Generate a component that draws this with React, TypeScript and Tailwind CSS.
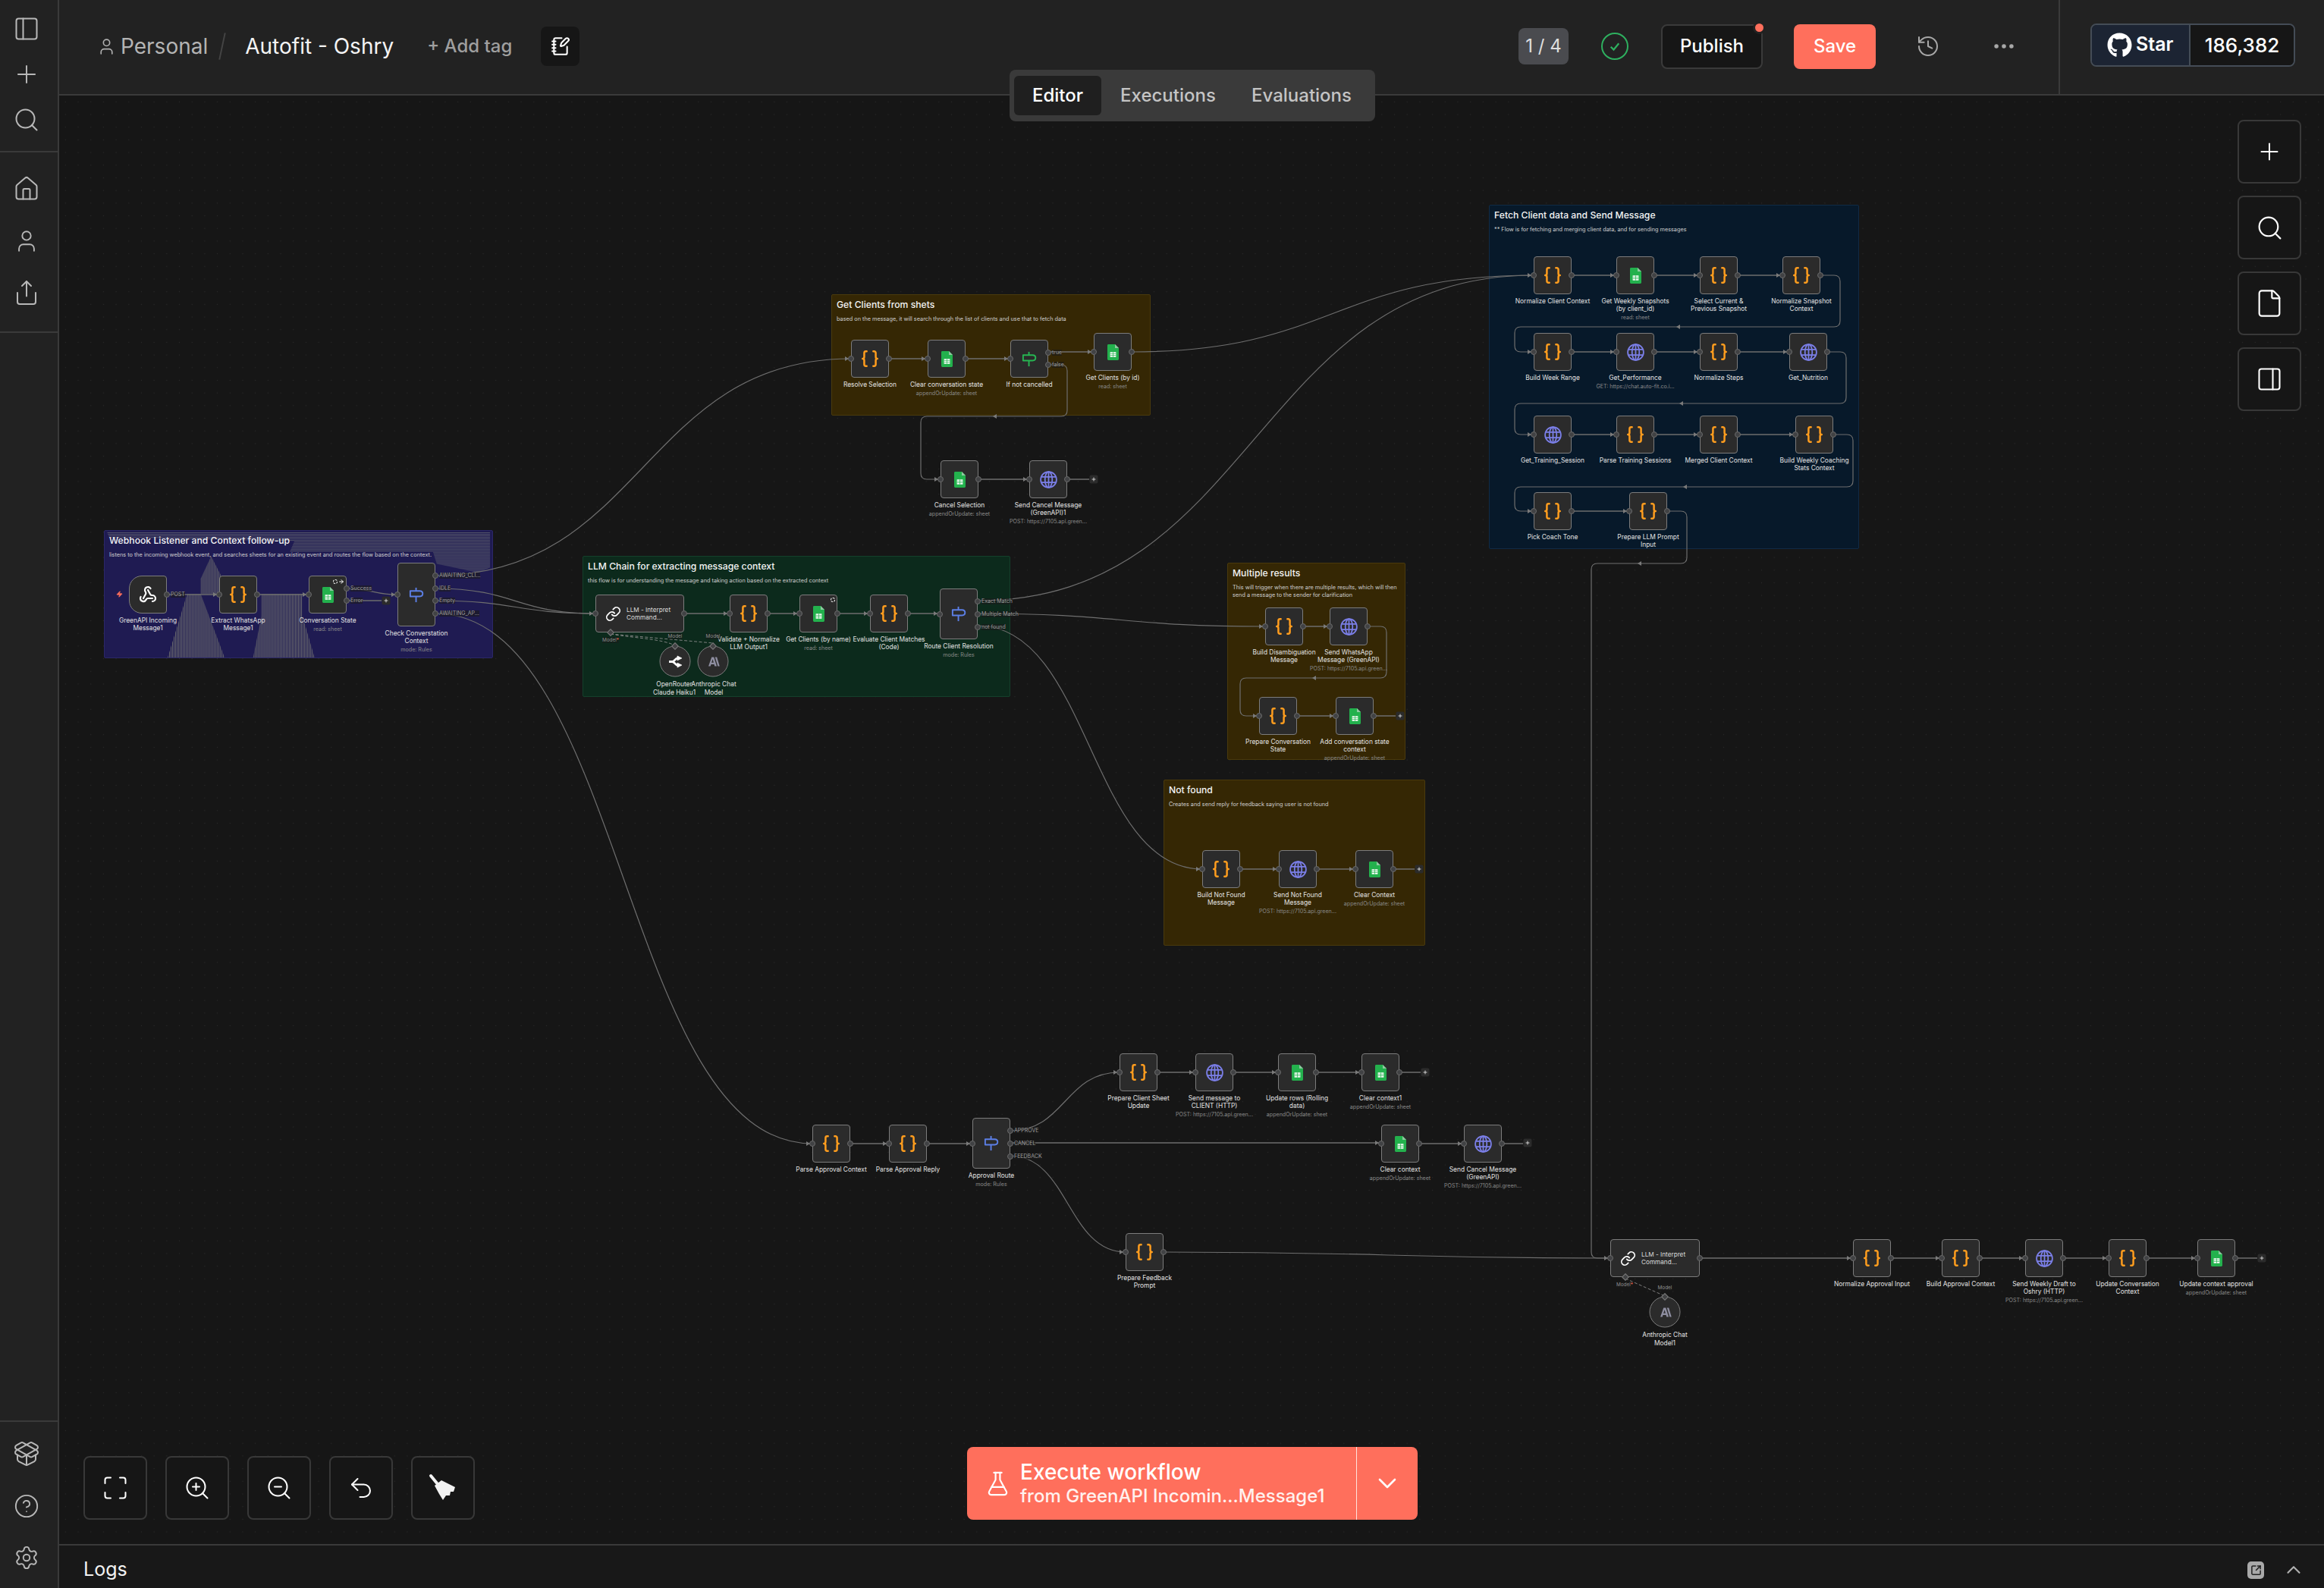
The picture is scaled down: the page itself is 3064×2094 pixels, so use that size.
import React from 'react';
import { PanelLeft, Plus, Search, House, User, Share, PackageOpen, CircleHelp, Settings, NotebookPen, History, Ellipsis, Maximize, ZoomIn, ZoomOut, Undo2, FlaskConical, ChevronDown, ChevronUp, Link, Webhook, Zap, File, PanelRight, SquareArrowOutUpRight, ArrowRight } from 'lucide-react';
import { FaGithub } from 'react-icons/fa';

type Out = { dy: number; t?: string };
type Nd = { x: number; y: number; w?: number; h?: number; icon: string; l: string[]; s?: string; noIn?: boolean; trigger?: boolean; outs?: Out[]; badge?: number; inner?: string[]; };

const CODE = 'code', SHEET = 'sheet', GLOBE = 'globe', SW = 'switch', IF = 'if', LINK = 'link', HOOK = 'webhook';
const AU = 'appendOrUpdate: sheet';
const POST = 'POST: https://7105.api.green...';

const nodes: Nd[] = [
  { x: 170, y: 759, icon: HOOK, trigger: true, noIn: true, l: ['GreenAPI Incoming', 'Message1'], outs: [{ dy: 0, t: 'POST' }] },
  { x: 289, y: 759, icon: CODE, l: ['Extract WhatsApp', 'Message1'] },
  { x: 407, y: 759, icon: SHEET, l: ['Conversation State'], s: 'read: sheet', badge: 2, outs: [{ dy: -8, t: 'Success' }, { dy: 8, t: 'Error' }] },
  { x: 524, y: 742, h: 84, icon: SW, l: ['Check Converstation', 'Context'], s: 'mode: Rules', outs: [{ dy: -25, t: 'AWAITING_CLI...' }, { dy: -8, t: 'IDLE' }, { dy: 8, t: 'Empty' }, { dy: 25, t: 'AWAITING_AP...' }] },

  { x: 785, y: 784, w: 117, icon: LINK, l: [], inner: ['LLM - Interpret', 'Command...'] },
  { x: 962, y: 784, icon: CODE, l: ['Validate + Normalize', 'LLM Output1'] },
  { x: 1054, y: 784, icon: SHEET, l: ['Get Clients (by name)'], s: 'read: sheet', badge: 1 },
  { x: 1147, y: 784, icon: CODE, l: ['Evaluate Client Matches', '(Code)'] },
  { x: 1239, y: 776, h: 67, icon: SW, l: ['Route Client Resolution'], s: 'mode: Rules', outs: [{ dy: -17, t: 'Exact Match' }, { dy: 0, t: 'Multiple Match' }, { dy: 17, t: 'not found' }] },

  { x: 1122, y: 448, icon: CODE, l: ['Resolve Selection'] },
  { x: 1223, y: 448, icon: SHEET, l: ['Clear conversation state'], s: AU },
  { x: 1332, y: 448, icon: IF, l: ['If not cancelled'], outs: [{ dy: -8, t: 'true' }, { dy: 8, t: 'false' }] },
  { x: 1442, y: 439, icon: SHEET, l: ['Get Clients (by id)'], s: 'read: sheet' },
  { x: 1240, y: 607, icon: SHEET, l: ['Cancel Selection'], s: AU },
  { x: 1357, y: 607, icon: GLOBE, l: ['Send Cancel Message', '(GreenAPI)1'], s: POST },

  { x: 1668, y: 801, icon: CODE, l: ['Build Disambiguation', 'Message'] },
  { x: 1753, y: 801, icon: GLOBE, l: ['Send WhatsApp', 'Message (GreenAPI)'], s: POST },
  { x: 1660, y: 919, icon: CODE, l: ['Prepare Conversation', 'State'] },
  { x: 1761, y: 919, icon: SHEET, l: ['Add conversation state', 'context'], s: AU },

  { x: 1585, y: 1121, icon: CODE, l: ['Build Not Found', 'Message'] },
  { x: 1686, y: 1121, icon: GLOBE, l: ['Send Not Found', 'Message'], s: POST },
  { x: 1787, y: 1121, icon: SHEET, l: ['Clear Context'], s: AU },

  { x: 2022, y: 338, icon: CODE, l: ['Normalize Client Context'] },
  { x: 2131, y: 338, icon: SHEET, l: ['Get Weekly Snapshots', '(by client_id)'], s: 'read: sheet' },
  { x: 2241, y: 338, icon: CODE, l: ['Select Current &', 'Previous Snapshot'] },
  { x: 2350, y: 338, icon: CODE, l: ['Normalize Snapshot', 'Context'] },
  { x: 2022, y: 439, icon: CODE, l: ['Build Week Range'] },
  { x: 2131, y: 439, icon: GLOBE, l: ['Get_Performance'], s: 'GET: https://chat.auto-fit.co.i...' },
  { x: 2241, y: 439, icon: CODE, l: ['Normalize Steps'] },
  { x: 2359, y: 439, icon: GLOBE, l: ['Get_Nutrition'] },
  { x: 2022, y: 548, icon: GLOBE, l: ['Get_Training_Session'] },
  { x: 2131, y: 548, icon: CODE, l: ['Parse Training Sessions'] },
  { x: 2241, y: 548, icon: CODE, l: ['Merged Client Context'] },
  { x: 2367, y: 548, icon: CODE, l: ['Build Weekly Coaching', 'Stats Context'] },
  { x: 2022, y: 649, icon: CODE, l: ['Pick Coach Tone'] },
  { x: 2148, y: 649, icon: CODE, l: ['Prepare LLM Prompt', 'Input'] },

  { x: 1071, y: 1483, icon: CODE, l: ['Parse Approval Context'] },
  { x: 1172, y: 1483, icon: CODE, l: ['Parse Approval Reply'] },
  { x: 1282, y: 1474, h: 67, icon: SW, l: ['Approval Route'], s: 'mode: Rules', outs: [{ dy: -17, t: 'APPROVE' }, { dy: 0, t: 'CANCEL' }, { dy: 17, t: 'FEEDBACK' }] },
  { x: 1476, y: 1389, icon: CODE, l: ['Prepare Client Sheet', 'Update'] },
  { x: 1576, y: 1389, icon: GLOBE, l: ['Send message to', 'CLIENT (HTTP)'], s: POST },
  { x: 1685, y: 1389, icon: SHEET, l: ['Update rows (Rolling', 'data)'], s: AU },
  { x: 1795, y: 1389, icon: SHEET, l: ['Clear context1'], s: AU },
  { x: 1821, y: 1483, icon: SHEET, l: ['Clear context'], s: AU },
  { x: 1930, y: 1483, icon: GLOBE, l: ['Send Cancel Message', '(GreenAPI)'], s: POST },
  { x: 1484, y: 1626, icon: CODE, l: ['Prepare Feedback', 'Prompt'] },

  { x: 2123, y: 1634, w: 118, icon: LINK, l: [], inner: ['LLM - Interpret', 'Command...'] },
  { x: 2443, y: 1634, icon: CODE, l: ['Normalize Approval Input'] },
  { x: 2560, y: 1634, icon: CODE, l: ['Build Approval Context'] },
  { x: 2670, y: 1634, icon: GLOBE, l: ['Send Weekly Draft to', 'Oshry (HTTP)'], s: POST },
  { x: 2780, y: 1634, icon: CODE, l: ['Update Conversation', 'Context'] },
  { x: 2897, y: 1634, icon: SHEET, l: ['Update context approval'], s: AU },
];

const circles = [
  { cx: 890, cy: 872, kind: 'router', l: ['OpenRouter', 'Claude Haiku1'], lx: 889 },
  { cx: 940, cy: 872, kind: 'anthropic', l: ['Anthropic Chat', 'Model'], lx: 941 },
  { cx: 2195, cy: 1730, kind: 'anthropic', l: ['Anthropic Chat', 'Model1'], lx: 2195 },
];

const groups = [
  { x: 137, y: 699, w: 513, h: 169, bg: 'bg-[#1f1b52]', bd: 'border-[#2b2767]', t: 'Webhook Listener and Context follow-up', s: ['listens to the incoming webhook event, and searches sheets for an existing event and routes the flow based on the context.'], hatch: true },
  { x: 768, y: 733, w: 564, h: 186, bg: 'bg-[#0c2a1c]', bd: 'border-[#14402b]', t: 'LLM Chain for extracting message context', s: ['this flow is for understanding the message and taking action based on the extracted context'] },
  { x: 1096, y: 388, w: 421, h: 160, bg: 'bg-[#352704]', bd: 'border-[#4a3a0c]', t: 'Get Clients from shets', s: ['based on the message, it will search through the list of clients and use that to fetch data'] },
  { x: 1618, y: 742, w: 235, h: 260, bg: 'bg-[#352704]', bd: 'border-[#4a3a0c]', t: 'Multiple results', s: ['This will trigger when there are multiple results, which will then', 'send a message to the sender for clarification'] },
  { x: 1534, y: 1028, w: 345, h: 219, bg: 'bg-[#352704]', bd: 'border-[#4a3a0c]', t: 'Not found', s: ['Creates and send reply for feedback saying user is not found'] },
  { x: 1963, y: 270, w: 488, h: 454, bg: 'bg-[#07192a]', bd: 'border-[#102a45]', t: 'Fetch Client data and Send Message', s: ['** Flow is for fetching and merging client data, and for sending messages'] },
];

const plusButtons = [[509, 792], [1442, 632], [1846, 944], [1871, 1146], [1879, 1414], [2014, 1507], [2982, 1659]];

const straight: number[][] = [
  [220, 784, 289], [339, 784, 407], [902, 809, 962], [1012, 809, 1054], [1104, 809, 1147], [1197, 809, 1239],
  [1172, 473, 1223], [1273, 473, 1332], [1382, 464, 1442], [1290, 632, 1357],
  [1718, 826, 1753], [1710, 944, 1761], [1635, 1146, 1686], [1736, 1146, 1787],
  [2072, 363, 2131], [2181, 363, 2241], [2291, 363, 2350],
  [2072, 464, 2131], [2181, 464, 2241], [2291, 464, 2359],
  [2072, 573, 2131], [2181, 573, 2241], [2291, 573, 2367],
  [2072, 674, 2148],
  [1122, 1508, 1172], [1222, 1508, 1282], [1526, 1414, 1576], [1626, 1414, 1685], [1735, 1414, 1795],
  [1871, 1508, 1930], [1332, 1507, 1821],
  [2241, 1659, 2443], [2493, 1659, 2560], [2610, 1659, 2670], [2720, 1659, 2780], [2830, 1659, 2897],
];
const toPlus: number[][] = [[457, 792, 503], [1407, 632, 1436], [1811, 944, 1840], [1837, 1146, 1865], [1845, 1414, 1873], [1980, 1508, 2008], [2947, 1659, 2976]];

const wrap = (x1: number, y1: number, xr: number, ym: number, xl: number, y2: number, x2: number) =>
  `M${x1} ${y1}H${xr - 8}Q${xr} ${y1} ${xr} ${y1 + 8}V${ym - 8}Q${xr} ${ym} ${xr - 8} ${ym}H${xl + 8}Q${xl} ${ym} ${xl} ${ym + 8}V${y2 - 8}Q${xl} ${y2} ${xl + 8} ${y2}H${x2}`;

const curves = [
  'M457 776C490 776 490 784 524 784',
  'M574 759C848 759 848 473 1122 473',
  'M574 776C680 776 680 809 785 809',
  'M574 792C680 792 680 809 785 809',
  'M574 809C822 809 822 1508 1071 1508',
  'M1289 792C1655 792 1655 363 2022 363',
  'M1492 464C1757 464 1757 363 2022 363',
  'M1289 809C1478 809 1478 826 1668 826',
  'M1289 825C1437 825 1437 1146 1585 1146',
  'M1332 1491C1404 1491 1404 1414 1476 1414',
  'M1332 1524C1408 1524 1408 1651 1484 1651',
  'M1534 1651C1830 1651 1830 1659 2123 1659',
  wrap(2400, 363, 2426, 431, 1997, 464, 2022),
  wrap(2409, 464, 2434, 532, 1997, 573, 2022),
  wrap(2417, 573, 2443, 642, 1997, 674, 2022),
  wrap(2198, 674, 2224, 743, 2098, 1659, 2123),
  wrap(1382, 481, 1407, 549, 1214, 632, 1240),
  wrap(1803, 826, 1828, 894, 1635, 944, 1660),
];
const arrowsR = [[524, 784], [1122, 473], [785, 809], [1071, 1508], [2022, 363], [1668, 826], [1585, 1146], [1476, 1414], [1484, 1651], [2123, 1659], [2022, 464], [2022, 573], [2022, 674], [1240, 632], [1660, 944]];
const arrowsL = [[2213, 431], [2217, 532], [2222, 642], [2162, 743], [1312, 549], [1733, 894]];

function Braces() {
  return (
    <svg width="26" height="26" viewBox="0 0 24 24" fill="none" stroke="#ff9d1e" strokeWidth="2.3" strokeLinecap="round" strokeLinejoin="round">
      <path d="M8 3H7a2 2 0 0 0-2 2v5a2 2 0 0 1-2 2 2 2 0 0 1 2 2v5c0 1.1.9 2 2 2h1" />
      <path d="M16 21h1a2 2 0 0 0 2-2v-5c0-1.1.9-2 2-2a2 2 0 0 1-2-2V5a2 2 0 0 0-2-2h-1" />
    </svg>
  );
}
function Sheet() {
  return (
    <svg width="15" height="21" viewBox="0 0 15 21">
      <path d="M1.4 0H10L15 5V19.6A1.4 1.4 0 0 1 13.6 21H1.4A1.4 1.4 0 0 1 0 19.6V1.4A1.4 1.4 0 0 1 1.4 0Z" fill="#23b14d" />
      <path d="M10 0L15 5H10Z" fill="#8fc9a0" />
      <rect x="3.6" y="10.3" width="7.8" height="6.4" fill="#fff" />
      <path d="M3.6 12.4H11.4M3.6 14.5H11.4M7.5 10.3V16.7" stroke="#23b14d" strokeWidth="0.7" />
    </svg>
  );
}
function Globe() {
  return (
    <svg width="25" height="25" viewBox="0 0 24 24" fill="none" stroke="#7b7fe8" strokeWidth="1.7">
      <circle cx="12" cy="12" r="10" />
      <ellipse cx="12" cy="12" rx="4.6" ry="10" />
      <path d="M12 2V22M2.9 8.5H21.1M2.9 15.5H21.1" />
    </svg>
  );
}
function Sign({ color }: { color: string }) {
  return (
    <svg width="23" height="23" viewBox="0 0 24 24" fill="none" stroke={color} strokeWidth="2">
      <path d="M11 2V22" />
      <path d="M3 6.5H16C21.5 6.5 21.5 14 16 14H3Z" strokeLinejoin="round" fill="#2b2b2b" />
    </svg>
  );
}
function RouterLogo() {
  return (
    <svg width="20" height="20" viewBox="0 0 24 24" fill="none" stroke="#fff" strokeWidth="3.4" strokeLinejoin="round">
      <path d="M2 12H7C11 12 11 6.5 16 6.5" />
      <path d="M2 12H7C11 12 11 17.5 16 17.5" />
      <path d="M15 3L22 6.5L15 10Z" fill="#fff" strokeWidth="1" />
      <path d="M15 14L22 17.5L15 21Z" fill="#fff" strokeWidth="1" />
    </svg>
  );
}
function AnthropicLogo() {
  return (
    <svg width="18" height="18" viewBox="0 0 24 24" fill="#8e8ea0">
      <path d="M9 4H13L18 20H14.4L13.4 16.6H8L6.9 20H3.4ZM8.9 13.6H12.5L10.8 7.8Z" />
      <path d="M15 4H18.2L23 20H19.8Z" />
    </svg>
  );
}
function Broom() {
  return (
    <svg width="48" height="44" viewBox="0 0 48 44">
      <path d="M8 6L17 17" stroke="#f2f2f2" strokeWidth="4" strokeLinecap="round" />
      <polygon points="13,19 22,12 40,21 38,27 34,27 33,32 28,32 24,38 19,30" fill="#f2f2f2" />
    </svg>
  );
}

function NodeIcon({ k }: { k: string }) {
  if (k === CODE) return <Braces />;
  if (k === SHEET) return <Sheet />;
  if (k === GLOBE) return <Globe />;
  if (k === SW) return <Sign color="#5c7fe6" />;
  if (k === IF) return <Sign color="#27b552" />;
  if (k === LINK) return <Link size={21} color="#fff" strokeWidth={2} />;
  return <Webhook size={24} color="#fff" strokeWidth={2.2} />;
}

function Port({ top, left }: { top: number; left: string }) {
  return <span className={`absolute size-[8px] rounded-full bg-[#414244] border border-[#6a6a6a] -translate-x-1/2 -translate-y-1/2 ${left}`} style={{ top }} />;
}

function CanvasNode({ n }: { n: Nd }) {
  const w = n.w ?? 50;
  const h = n.h ?? 50;
  return (
    <div className="absolute" style={{ left: n.x - 78, top: n.y - 126, width: w, height: h }}>
      <div className={`w-full h-full bg-[#2b2b2b] border border-[#7c7c7c] flex items-center ${n.trigger ? 'rounded-l-[17px] rounded-r-[4px]' : 'rounded-[4px]'} ${n.inner ? 'pl-[12px] gap-[7px]' : 'justify-center'}`}>
        <NodeIcon k={n.icon} />
        {n.inner && (
          <div className="text-[8.2px] leading-[10.5px] text-[#dcdcdc] whitespace-nowrap">
            {n.inner.map((t) => <div key={t}>{t}</div>)}
          </div>
        )}
      </div>
      {n.badge ? (
        <div className="absolute top-[4px] right-[3px] flex items-center gap-[1px]">
          <span className="size-[6px] rounded-full border border-dashed border-white" />
          {n.badge === 2 && <ArrowRight size={8} color="#fff" strokeWidth={3} />}
        </div>
      ) : null}
      {!n.noIn && <Port top={h / 2} left="left-0" />}
      {(n.outs ?? [{ dy: 0 }]).map((o, i) => (
        <React.Fragment key={i}>
          <Port top={h / 2 + o.dy} left="left-full" />
          {o.t && (
            <span className="absolute left-[calc(100%+5px)] -translate-y-1/2 text-[7px] leading-[8px] text-[#9c9c9c] bg-[#1a1a1a]/60 whitespace-nowrap" style={{ top: h / 2 + o.dy }}>{o.t}</span>
          )}
        </React.Fragment>
      ))}
      {n.l.length > 0 && (
        <div className="absolute top-full left-1/2 -translate-x-1/2 mt-[3.5px] flex flex-col items-center whitespace-nowrap">
          {n.l.map((t) => <div key={t} className="text-[8.4px] leading-[10.6px] text-[#e2e2e2]">{t}</div>)}
          {n.s && <div className="text-[7.1px] leading-[9px] mt-[1.6px] text-[#8a8a8a]">{n.s}</div>}
        </div>
      )}
    </div>
  );
}

function Side({ children }: { children: React.ReactNode }) {
  return <div className="size-[84px] flex items-center justify-center rounded-[8px] border-2 border-[#383838] bg-[#161616] text-white">{children}</div>;
}

function SideIcon({ Icon, size = 36 }: { Icon: React.ComponentType<{ size?: number; strokeWidth?: number }>; size?: number }) {
  return (
    <div className="h-[68.5px] flex items-center justify-center text-[#b8b8b8]">
      <Icon size={size} strokeWidth={1.35} />
    </div>
  );
}

export default function App() {
  return (
    <div className="flex w-[3064px] h-[2094px] overflow-hidden bg-[#161616] text-white [font-family:Inter,sans-serif]">
      <aside className="w-[78px] shrink-0 h-full bg-[#222222] border-r-2 border-[#3a3a3a] flex flex-col pr-0">
        <div className="h-[201px] pt-[8px] pr-[6px] border-b-2 border-[#3a3a3a] text-[#b8b8b8] flex flex-col items-center">
          <div className="h-[60px] flex items-center"><PanelLeft size={36} strokeWidth={1.35} /></div>
          <div className="h-[60px] flex items-center"><Plus size={38} strokeWidth={1.25} /></div>
          <div className="h-[60px] flex items-center"><Search size={36} strokeWidth={1.35} /></div>
        </div>
        <div className="h-[238px] pt-[14px] pr-[6px] border-b-2 border-[#3a3a3a]">
          <SideIcon Icon={House} />
          <SideIcon Icon={User} size={34} />
          <SideIcon Icon={Share} />
        </div>
        <div className="flex-1" />
        <div className="h-[221px] pt-[8px] pr-[6px] border-t-2 border-[#3a3a3a]">
          <SideIcon Icon={PackageOpen} />
          <SideIcon Icon={CircleHelp} size={34} />
          <SideIcon Icon={Settings} size={34} />
        </div>
      </aside>

      <div className="flex-1 flex flex-col min-w-0">
        <header className="h-[126px] shrink-0 bg-[#222222] border-b-2 border-[#3a3a3a] flex items-center">
          <div className="pl-[50px] flex items-center flex-1 pb-[2px]">
            <User size={25} strokeWidth={1.6} className="text-[#b0b0b0]" />
            <span className="ml-[6px] text-[28px] text-[#b4b4b4]">Personal</span>
            <span className="ml-[18px] w-[2px] h-[36px] bg-[#444] rotate-[12deg]" />
            <span className="ml-[29px] text-[28px] text-[#f4f4f4]">Autofit - Oshry</span>
            <span className="ml-[44px] text-[24px] font-medium text-[#9f9f9f]">+ Add tag</span>
            <span className="ml-[38px] w-[51px] h-[52px] rounded-[8px] bg-[#161616] flex items-center justify-center"><NotebookPen size={26} strokeWidth={1.9} className="text-white" /></span>
            <div className="flex-1" />
            <span className="w-[66px] h-[48px] rounded-[8px] bg-[#4a4b4f] flex items-center justify-center text-[24px] text-[#dedede]">1 / 4</span>
            <span className="ml-[43px] size-[36px] rounded-full border-2 border-[#2eb05f] flex items-center justify-center">
              <svg width="18" height="18" viewBox="0 0 24 24" fill="none" stroke="#2eb05f" strokeWidth="3"><path d="M5 13L10 18L19 7" /></svg>
            </span>
            <div className="relative ml-[43px] w-[134px] h-[59px] rounded-[8px] bg-[#161616] border-2 border-[#3a3a3a] flex items-center justify-center text-[24px] font-medium">
              Publish
              <span className="absolute -top-[6px] -right-[6px] size-[17px] rounded-full bg-[#ff6f5c] border-[3px] border-[#222222]" />
            </div>
            <div className="ml-[41px] w-[108px] h-[59px] rounded-[8px] bg-[#ff6f5c] flex items-center justify-center text-[24px] font-medium">Save</div>
            <History size={32} strokeWidth={1.5} className="ml-[53px] text-[#a8a8a8]" />
            <Ellipsis size={34} strokeWidth={1.9} className="ml-[67px] text-[#a8a8a8]" />
            <div className="w-[55px]" />
          </div>
          <div className="w-[350px] h-full border-l-2 border-[#3a3a3a] flex items-center pl-[40px] pb-[6px]">
            <div className="w-[270px] h-[57px] rounded-[8px] border-2 border-[#444c56] flex overflow-hidden">
              <div className="w-[130px] bg-[#1c2433] border-r-2 border-[#444c56] flex items-center pl-[20px] gap-[5px]">
                <FaGithub size={33} />
                <span className="text-[25px] font-semibold">Star</span>
              </div>
              <div className="flex-1 bg-[#161616] flex items-center justify-center text-[26px] font-medium">186,382</div>
            </div>
          </div>
        </header>

        <main className="relative flex-1 bg-[#161616] bg-[radial-gradient(circle,#2a2a2a_0.8px,transparent_1px)] bg-[size:16.7px_16.7px]">
          {groups.map((g) => (
            <div key={g.t} className={`absolute rounded-[2px] border pl-[6px] pt-[5px] ${g.bg} ${g.bd}`} style={{ left: g.x - 78, top: g.y - 126, width: g.w, height: g.h }}>
              {g.hatch && (
                <svg className="absolute inset-0" width="100%" height="100%" viewBox="0 0 513 169">
                  <defs>
                    <pattern id="vh" width="2" height="2" patternUnits="userSpaceOnUse"><rect width="1" height="2" fill="#6a6a6e" /></pattern>
                    <pattern id="hh" width="2" height="2" patternUnits="userSpaceOnUse"><rect width="2" height="1" fill="#55566a" /></pattern>
                  </defs>
                  <polygon points="1,1 512,1 512,49 497,56 441,44 436,28 245,28 251,14 4,9" fill="url(#hh)" />
                  <polygon points="140,34 155,63 155,84 126,84 126,64" fill="url(#vh)" />
                  <polygon points="108,84 126,84 158,169 82,169" fill="url(#vh)" />
                  <polygon points="207,84 262,84 262,114 278,169 196,169 207,114" fill="url(#vh)" />
                </svg>
              )}
              <div className="relative text-[12.2px] leading-[16px] font-medium text-[#f4f4f4] whitespace-nowrap">{g.t}</div>
              <div className="relative mt-[6px]">
                {g.s.map((t) => <div key={t} className="text-[7.3px] leading-[10px] text-[#d0d0d0] whitespace-nowrap">{t}</div>)}
              </div>
            </div>
          ))}

          <svg className="absolute left-0 top-0" width="2986" height="1910" viewBox="78 126 2986 1910" fill="none">
            {straight.concat(toPlus).map(([a, y, b], i) => <path key={i} d={`M${a} ${y}H${b}`} stroke="#6e6e6e" strokeWidth="1.5" />)}
            {curves.map((d, i) => <path key={i} d={d} stroke="#6e6e6e" strokeWidth="1.2" />)}
            {straight.map(([, y, b], i) => <polygon key={i} points={`${b - 3},${y} ${b - 8},${y - 3} ${b - 8},${y + 3}`} fill="#7a7a7a" />)}
            {arrowsR.map(([x, y], i) => <polygon key={i} points={`${x - 3},${y} ${x - 8},${y - 3} ${x - 8},${y + 3}`} fill="#7a7a7a" />)}
            {arrowsL.map(([x, y], i) => <polygon key={i} points={`${x - 3},${y} ${x + 2},${y - 3} ${x + 2},${y + 3}`} fill="#7a7a7a" />)}
            <path d="M805 836C840 842 870 842 890 851M805 836L940 848M2143 1686L2195 1709" stroke="#8a8a8a" strokeWidth="0.9" strokeDasharray="4 2.5" />
          </svg>

          {nodes.map((n, i) => <CanvasNode key={i} n={n} />)}

          {circles.map((c, i) => (
            <div key={i} className="absolute size-[41px] -translate-x-1/2 -translate-y-1/2 rounded-full bg-[#2b2b2b] border border-[#7c7c7c] flex items-center justify-center" style={{ left: c.cx - 78, top: c.cy - 126 }}>
              {c.kind === 'router' ? <RouterLogo /> : <AnthropicLogo />}
              <span className="absolute -top-[4px] left-1/2 -ml-[3.5px] size-[7px] rotate-45 bg-[#414244] border border-[#7a7a7a]" />
            </div>
          ))}
          {circles.map((c, i) => (
            <div key={i} className="absolute -translate-x-1/2 flex flex-col items-center whitespace-nowrap text-[8.4px] leading-[10.6px] text-[#e2e2e2]" style={{ left: c.lx - 78, top: c.cy + 20 + 5 - 126 }}>
              {c.l.map((t) => <div key={t}>{t}</div>)}
            </div>
          ))}
          {[[805, 834], [2143, 1684]].map(([x, y], i) => (
            <span key={i} className="absolute size-[7px] -translate-x-1/2 -translate-y-1/2 rotate-45 bg-[#414244] border border-[#7a7a7a]" style={{ left: x - 78, top: y - 126 }} />
          ))}
          {[[805, 844, 1], [890, 839, 0], [940, 839, 0], [2142, 1694, 1], [2195, 1698, 0]].map(([x, y, star], i) => (
            <span key={i} className="absolute -translate-x-1/2 -translate-y-1/2 text-[6.4px] leading-[8px] text-[#8e8e8e] bg-[#1a1a1a]/50" style={{ left: x - 78, top: y - 126 }}>
              Model{star ? <span className="text-[#ff6f5c]">*</span> : null}
            </span>
          ))}
          <Zap size={9} fill="#ff6f5c" stroke="#ff6f5c" className="absolute left-[75px] top-[653px]" />

          {plusButtons.map(([x, y], i) => (
            <span key={i} className="absolute size-[11px] -translate-x-1/2 -translate-y-1/2 rounded-[2px] bg-[#2b2b2b] flex items-center justify-center" style={{ left: x - 78, top: y - 126 }}>
              <Plus size={7} color="#e4e4e4" strokeWidth={3} />
            </span>
          ))}

          {/* tabs */}
          <div className="absolute left-[1253px] -top-[34px] w-[482px] h-[68px] rounded-[8px] bg-[#3a3a3a] flex items-center px-[6px] text-[24px] font-medium text-[#c4c4c4]">
            <div className="w-[115px] h-[52px] rounded-[6px] bg-[#1f1f1f] text-white flex items-center justify-center">Editor</div>
            <div className="w-[176px] text-center">Executions</div>
            <div className="w-[176px] text-center">Evaluations</div>
          </div>

          {/* right tools */}
          <div className="absolute left-[2872px] top-[32px] flex flex-col gap-[16px]">
            <Side><Plus size={36} strokeWidth={1.35} /></Side>
            <Side><Search size={37} strokeWidth={1.4} /></Side>
            <Side><File size={40} strokeWidth={1.3} /></Side>
            <Side><PanelRight size={36} strokeWidth={1.4} /></Side>
          </div>

          {/* zoom tools */}
          <div className="absolute left-[32px] bottom-[32px] flex gap-[24px]">
            <Side><Maximize size={36} strokeWidth={1.35} /></Side>
            <Side><ZoomIn size={36} strokeWidth={1.35} /></Side>
            <Side><ZoomOut size={36} strokeWidth={1.35} /></Side>
            <Side><Undo2 size={36} strokeWidth={1.35} /></Side>
            <Side><Broom /></Side>
          </div>

          {/* execute */}
          <div className="absolute left-[1197px] bottom-[32px] w-[594px] h-[96px] rounded-[8px] bg-[#ff6f5c] flex items-center text-white">
            <div className="w-[514px] h-full border-r border-[#ffe3de] flex items-center pl-[23px] gap-[12px]">
              <FlaskConical size={35} strokeWidth={1.5} />
              <div>
                <div className="text-[28px] leading-[34px] font-medium">Execute workflow</div>
                <div className="text-[24px] leading-[30px] font-medium text-[#fff1ee]">from GreenAPI Incomin...Message1</div>
              </div>
            </div>
            <div className="flex-1 flex items-center justify-center"><ChevronDown size={40} strokeWidth={1.6} /></div>
          </div>
        </main>

        <footer className="h-[58px] shrink-0 pt-[8px] bg-[#181818] border-t-2 border-[#3a3a3a] flex items-center pl-[32px] pr-[25px]">
          <span className="text-[25px] text-[#f2f2f2]">Logs</span>
          <div className="flex-1" />
          <span className="w-[22px] h-[23px] rounded-[5px] bg-[#a9a9a9] flex items-center justify-center text-[#222]"><SquareArrowOutUpRight size={15} strokeWidth={2.4} /></span>
          <ChevronUp size={30} strokeWidth={1.7} className="ml-[24px] text-[#b0b0b0]" />
        </footer>
      </div>
    </div>
  );
}
